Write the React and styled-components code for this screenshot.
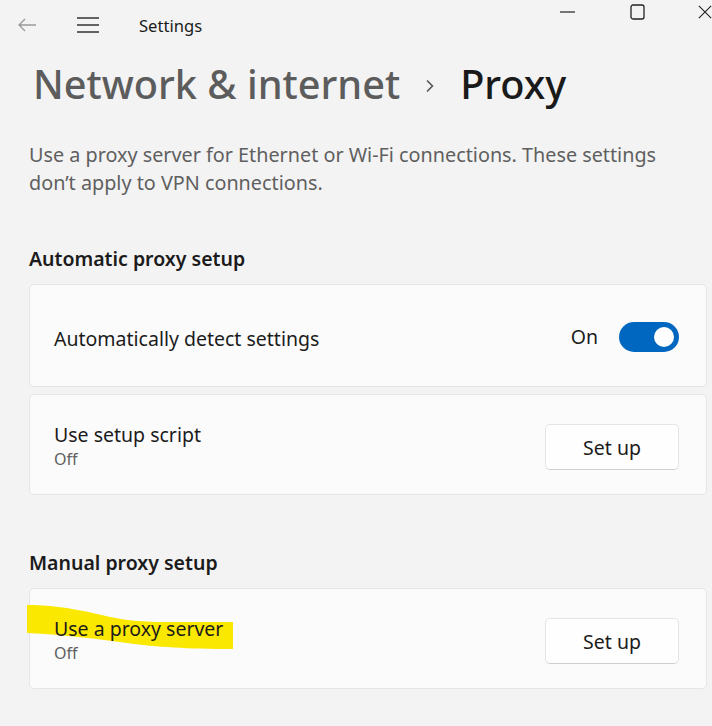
import React from 'react'
import styled, { createGlobalStyle } from 'styled-components'

const GlobalStyle = createGlobalStyle`
    html, body {
        margin: 0;
        padding: 0;
        background: #f3f3f3;
    }
    body {
        font-family: 'Noto Sans', 'Open Sans', sans-serif;
        color: #1b1b1b;
    }
`

const App = () => {
    return (
        <Window>
            <GlobalStyle />
            <TitleBar>
                <NavIcon dim>
                    <svg width='20' height='16' viewBox='0 0 20 16'>
                        <path d='M19 8H2M8 2L2 8l6 6' fill='none' stroke='#9a9a9a' strokeWidth='1.3' />
                    </svg>
                </NavIcon>
                <NavIcon>
                    <svg width='22' height='16' viewBox='0 0 22 16'>
                        <path d='M0 1h22M0 8h22M0 15h22' fill='none' stroke='#333' strokeWidth='1.6' />
                    </svg>
                </NavIcon>
                <AppName>Settings</AppName>
                <Controls>
                    <CtrlButton width='70px'>
                        <svg width='16' height='16' viewBox='0 0 16 16'>
                            <path d='M0 8h15' stroke='#222' strokeWidth='1.2' />
                        </svg>
                    </CtrlButton>
                    <CtrlButton width='68px'>
                        <svg width='16' height='16' viewBox='0 0 16 16'>
                            <rect x='1' y='1' width='13' height='14' rx='2' fill='none' stroke='#222' strokeWidth='1.3' />
                        </svg>
                    </CtrlButton>
                    <CtrlButton width='14px'>
                        <svg width='16' height='16' viewBox='0 0 16 16'>
                            <path d='M1 1l14 14M15 1L1 15' stroke='#222' strokeWidth='1.3' />
                        </svg>
                    </CtrlButton>
                </Controls>
            </TitleBar>

            <Content>
                <Breadcrumb>
                    <Crumb>Network &amp; internet</Crumb>
                    <Chevron>
                        <svg width='10' height='14' viewBox='0 0 10 14'>
                            <path d='M2 1.5L7.5 7 2 12.5' fill='none' stroke='#555' strokeWidth='1.6' />
                        </svg>
                    </Chevron>
                    <Crumb current>Proxy</Crumb>
                </Breadcrumb>

                <Description>
                    Use a proxy server for Ethernet or Wi-Fi connections. These settings
                    don’t apply to VPN connections.
                </Description>

                <SectionHeading>Automatic proxy setup</SectionHeading>
                <CardList>
                    <Card height='103px' pad='6px'>
                        <RowText>
                            <RowTitle>Automatically detect settings</RowTitle>
                        </RowText>
                        <ToggleWrap>
                            <ToggleLabel>On</ToggleLabel>
                            <Toggle on>
                                <Knob />
                            </Toggle>
                        </ToggleWrap>
                    </Card>
                    <Card>
                        <RowText>
                            <RowTitle>Use setup script</RowTitle>
                            <RowCaption>Off</RowCaption>
                        </RowText>
                        <SetupButton>Set up</SetupButton>
                    </Card>
                </CardList>

                <SectionHeading manual>Manual proxy setup</SectionHeading>
                <CardList>
                    <Card>
                        <Highlight viewBox='0 0 206 46' preserveAspectRatio='none'>
                            <path
                                d='M0 0 C20 0 40 2 70 9 C95 15 110 17 140 17 L206 17 L206 44 C160 44 130 42 100 38 C70 34 40 30 0 28 Z'
                                fill='#fbe800'
                            />
                        </Highlight>
                        <RowText>
                            <RowTitle>Use a proxy server</RowTitle>
                            <RowCaption>Off</RowCaption>
                        </RowText>
                        <SetupButton>Set up</SetupButton>
                    </Card>
                </CardList>
            </Content>
        </Window>
    )
}

const Window = styled.div`
    width: 712px;
    height: 726px;
    overflow: hidden;
    background: #f3f3f3;
`

const TitleBar = styled.div`
    height: 50px;
    display: flex;
    align-items: center;
    padding-left: 17px;
`

const NavIcon = styled.div`
    width: ${props => (props.dim ? '60px' : '62px')};
    display: flex;
    align-items: center;
`

const AppName = styled.div`
    font-size: 16.6px;
    color: #1b1b1b;
    margin-top: 1px;
`

const Controls = styled.div`
    margin-left: auto;
    align-self: flex-start;
    display: flex;
    padding-top: 4px;
`

const CtrlButton = styled.div`
    width: ${props => props.width};
    height: 16px;
    display: flex;
    align-items: center;
    overflow: visible;
`

const Content = styled.div`
    padding: 0 5px 0 29px;
`

const Breadcrumb = styled.h1`
    margin: 9px 0 0 4px;
    display: flex;
    align-items: center;
    gap: 25px;
    height: 50px;
    font-weight: 500;
`

const Crumb = styled.span`
    font-size: 39.7px;
    color: ${props => (props.current ? '#1a1a1a' : '#5c5c5c')};
`

const Chevron = styled.span`
    display: flex;
    align-items: center;
    padding-top: 4px;
`

const Description = styled.p`
    margin: 32px 0 0;
    font-size: 19.8px;
    line-height: 28px;
    color: #5f5f5f;
    max-width: 660px;
`

const SectionHeading = styled.h2`
    margin: ${props => (props.manual ? '56px' : '50px')} 0 13px;
    font-size: 19.5px;
    font-weight: 600;
    line-height: 24px;
    color: #1b1b1b;
`

const CardList = styled.div`
    display: flex;
    flex-direction: column;
    gap: 7px;
`

const Card = styled.div`
    position: relative;
    height: ${props => props.height || '101px'};
    flex-shrink: 0;
    box-sizing: border-box;
    background: #fbfbfb;
    border: 1.5px solid #e5e5e5;
    border-radius: 5px;
    display: flex;
    align-items: center;
    padding: ${props => props.pad || '3px'} 27px 0 24px;
`

const Highlight = styled.svg`
    position: absolute;
    left: -3px;
    top: 16px;
    width: 206px;
    height: 46px;
`

const RowText = styled.div`
    position: relative;
    flex: 1;
    display: flex;
    flex-direction: column;
`

const RowTitle = styled.div`
    font-size: 19.5px;
    line-height: 26px;
    color: #1b1b1b;
`

const RowCaption = styled.div`
    font-size: 16px;
    line-height: 23px;
    color: #606060;
`

const ToggleWrap = styled.div`
    display: flex;
    align-items: center;
    gap: 21px;
    margin-top: -4px;
`

const ToggleLabel = styled.span`
    font-size: 19.5px;
    color: #1b1b1b;
`

const Toggle = styled.div`
    width: 60px;
    height: 30px;
    box-sizing: border-box;
    border-radius: 15px;
    background: ${props => (props.on ? '#0067c0' : 'transparent')};
    display: flex;
    align-items: center;
    justify-content: ${props => (props.on ? 'flex-end' : 'flex-start')};
    padding: 0 5px;
`

const Knob = styled.div`
    width: 20px;
    height: 20px;
    border-radius: 50%;
    background: #fff;
`

const SetupButton = styled.button`
    width: 134px;
    height: 46px;
    box-sizing: border-box;
    background: #fefefe;
    border: 1.5px solid #e5e5e5;
    border-bottom-color: #d0d0d0;
    border-radius: 5px;
    font-family: 'Noto Sans', 'Open Sans', sans-serif;
    font-size: 19.5px;
    color: #1b1b1b;
    margin-top: 2px;
`

export default App
